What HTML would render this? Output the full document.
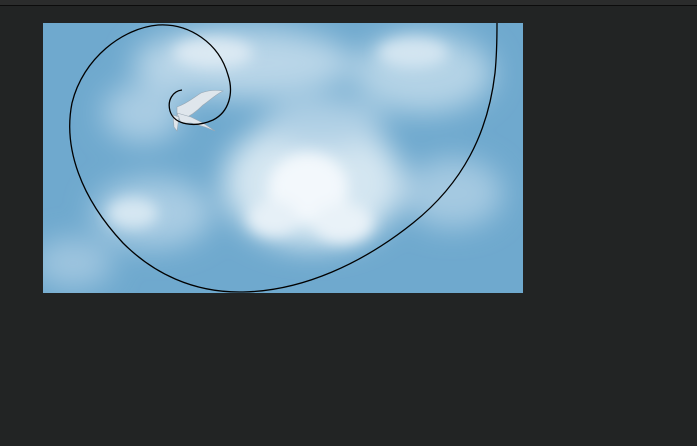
<!DOCTYPE html>
<html><head><style>
html,body{margin:0;padding:0}
body{width:697px;height:446px;background:#222424;position:relative;overflow:hidden}
.top{position:absolute;left:0;top:0;width:697px;height:5px;background:#2b2c2c;border-bottom:1px solid #0c0c0c}
.sky{position:absolute;left:43px;top:23px;width:480px;height:270px;background:#6ea9cf;overflow:hidden}
.sky svg{position:absolute;left:0;top:0}
</style></head><body>
<div class="top"></div>
<div class="sky">
<svg width="480" height="270" viewBox="0 0 480 270">
<defs>
<filter id="b" x="-50%" y="-50%" width="200%" height="200%"><feGaussianBlur stdDeviation="14"/></filter>
<filter id="b2" x="-50%" y="-50%" width="200%" height="200%"><feGaussianBlur stdDeviation="7"/></filter>
</defs>
<rect width="480" height="270" fill="#6fa9ce"/>
<g filter="url(#b)">
<ellipse cx="270" cy="160" rx="90" ry="65" fill="#d4e6f1"/>
<ellipse cx="200" cy="40" rx="110" ry="35" fill="#b9d6e8"/>
<ellipse cx="380" cy="50" rx="70" ry="40" fill="#b4d3e6"/>
<ellipse cx="110" cy="190" rx="60" ry="35" fill="#a9cce3"/>
<ellipse cx="410" cy="170" rx="50" ry="35" fill="#a4c9e1"/>
<ellipse cx="100" cy="90" rx="40" ry="30" fill="#a9cce3"/>
<ellipse cx="30" cy="240" rx="40" ry="25" fill="#9ec5df"/>
<ellipse cx="280" cy="100" rx="60" ry="25" fill="#b0d0e5"/>
</g>
<g filter="url(#b2)">
<ellipse cx="265" cy="165" rx="40" ry="35" fill="#f3f8fc"/>
<ellipse cx="300" cy="200" rx="30" ry="20" fill="#e9f2f8"/>
<ellipse cx="230" cy="195" rx="25" ry="18" fill="#e6f0f7"/>
<ellipse cx="170" cy="30" rx="40" ry="15" fill="#dbe9f3"/>
<ellipse cx="90" cy="190" rx="25" ry="15" fill="#d6e7f2"/>
<ellipse cx="370" cy="30" rx="35" ry="15" fill="#d3e5f1"/>
</g>
<g fill="#dfe6ec" stroke="#9aa8b4" stroke-width="0.6">
<path d="M134 84 C145 80 150 75 158 70 C166 67 174 67 180 68 C172 72 166 78 160 82 C154 88 148 93 140 96 L134 94 Z"/>
<path d="M134 90 L148 94 L160 100 L172 108 L162 104 L148 100 L138 100 Z"/>
<path d="M136 94 L134 108 L131 104 L130 92 Z"/>
</g>
<path d="M139 67 C130 68 124 77 127 88 C131 102 152 105 170 97 C186 89 191 70 185 52 C176 20 146 0 115 2 C80 5 40 35 29 80 C20 125 38 175 80 220 C110 250 150 270 200 269 C260 268 320 240 370 200 C420 160 445 110 452 50 C454 30 454 10 454 0" fill="none" stroke="#000" stroke-width="1.3"/>
</svg>
</div>
</body></html>
